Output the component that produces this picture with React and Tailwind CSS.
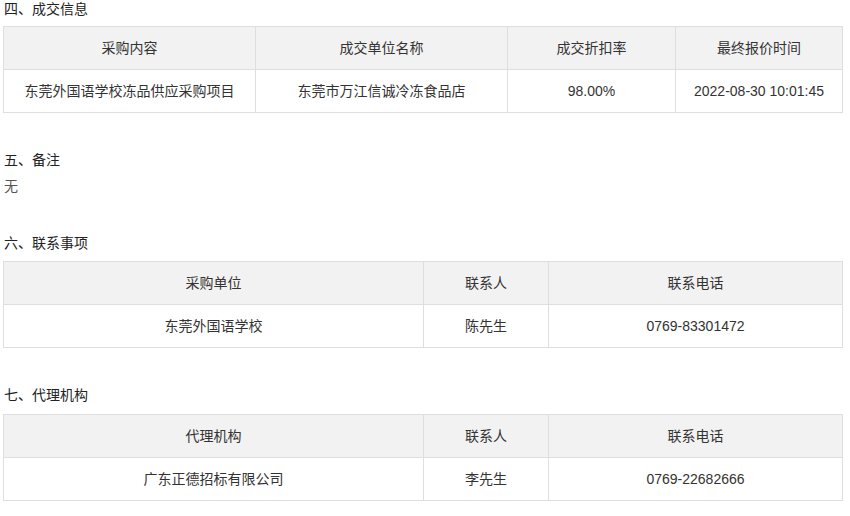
import React from "react";

const font = { fontFamily: '"Liberation Sans", "Noto Sans CJK SC", sans-serif' };

function Heading({ children, className = "" }) {
  return (
    <h4 className={`text-[14px] leading-4 text-[#222] font-normal pl-[4px] ${className}`}>
      {children}
    </h4>
  );
}

function InfoTable({ widths, head, row, className = "" }) {
  return (
    <table className={`ml-[3px] w-[839px] border-collapse table-fixed text-[14px] text-[#333] ${className}`}>
      <colgroup>
        {widths.map((w, i) => (
          <col key={i} className={w} />
        ))}
      </colgroup>
      <thead>
        <tr className="bg-[#f2f2f2]">
          {head.map((h) => (
            <th key={h} className="border border-[#dedede] h-[43px] p-0 font-normal text-center leading-4">
              {h}
            </th>
          ))}
        </tr>
      </thead>
      <tbody>
        <tr>
          {row.map((c) => (
            <td key={c} className="border border-[#dedede] h-[43px] p-0 text-center leading-4">
              {c}
            </td>
          ))}
        </tr>
      </tbody>
    </table>
  );
}

export default function App() {
  return (
    <div className="w-[850px] h-[516px] bg-white pt-[1px] overflow-hidden" style={font}>
      <Heading>四、成交信息</Heading>
      <InfoTable
        className="mt-[9px]"
        widths={["w-[252px]", "w-[252px]", "w-[168px]", "w-[167px]"]}
        head={["采购内容", "成交单位名称", "成交折扣率", "最终报价时间"]}
        row={["东莞外国语学校冻品供应采购项目", "东莞市万江信诚冷冻食品店", "98.00%", "2022-08-30 10:01:45"]}
      />

      <Heading className="mt-[39px]">五、备注</Heading>
      <p className="mt-[10px] pl-[4px] text-[14px] leading-4 text-[#555]">无</p>

      <Heading className="mt-[41px]">六、联系事项</Heading>
      <InfoTable
        className="mt-[10px]"
        widths={["w-[420px]", "w-[125px]", "w-[294px]"]}
        head={["采购单位", "联系人", "联系电话"]}
        row={["东莞外国语学校", "陈先生", "0769-83301472"]}
      />

      <Heading className="mt-[39px]">七、代理机构</Heading>
      <InfoTable
        className="mt-[11px]"
        widths={["w-[420px]", "w-[125px]", "w-[294px]"]}
        head={["代理机构", "联系人", "联系电话"]}
        row={["广东正德招标有限公司", "李先生", "0769-22682666"]}
      />
    </div>
  );
}
